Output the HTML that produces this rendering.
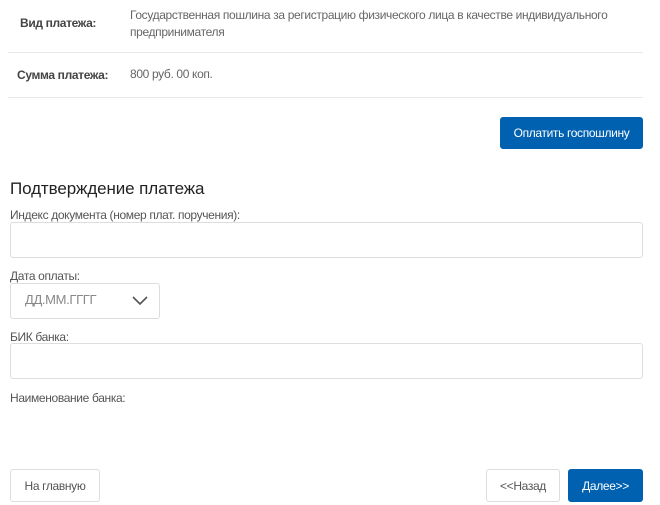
<!DOCTYPE html>
<html><head><meta charset="utf-8"><style>
*{box-sizing:border-box;margin:0;padding:0}
body{width:660px;height:505px;background:#fff;font-family:"Liberation Sans",Arial,sans-serif;color:#333;position:relative;overflow:hidden;font-size:12px;letter-spacing:-0.35px}
.a{position:absolute}
.lbl{font-weight:bold;color:#444}
.val{color:#666;line-height:17px}
.line{left:8px;width:635px;height:1px;background:#e8e8e8}
.btn{border:1px solid #ddd;border-radius:3px;background:#fff;color:#555;display:flex;align-items:center;justify-content:center;font-size:12px}
.blue{background:#0061b0;border-color:#0061b0;color:#fff}
.inp{border:1px solid #ddd;border-radius:3px;background:#fff}
.fl{color:#555;font-size:12px}
</style></head><body>
<div class="a lbl" style="left:20px;top:16px">Вид платежа:</div>
<div class="a val" style="left:130px;top:7px;width:500px">Государственная пошлина за регистрацию физического лица в качестве индивидуального предпринимателя</div>
<div class="a line" style="top:52px"></div>
<div class="a lbl" style="left:17px;top:68px">Сумма платежа:</div>
<div class="a val" style="left:130px;top:66px">800 руб. 00 коп.</div>
<div class="a line" style="top:97px"></div>
<div class="a btn blue" style="left:500px;top:117px;width:143px;height:32px">Оплатить госпошлину</div>
<div class="a" style="left:10px;top:179px;font-size:17px;color:#222;letter-spacing:-0.1px">Подтверждение платежа</div>
<div class="a fl" style="left:10px;top:208px">Индекс документа (номер плат. поручения):</div>
<div class="a inp" style="left:10px;top:222px;width:633px;height:36px"></div>
<div class="a fl" style="left:10px;top:269px">Дата оплаты:</div>
<div class="a inp" style="left:10px;top:283px;width:150px;height:36px"></div>
<div class="a" style="left:25px;top:292px;font-size:13px;color:#888">ДД.ММ.ГГГГ</div>
<svg class="a" style="left:131px;top:294px" width="18" height="12" viewBox="0 0 18 12"><path d="M2 3 L9 10 L16 3" fill="none" stroke="#555" stroke-width="1.6"/></svg>
<div class="a fl" style="left:10px;top:330px">БИК банка:</div>
<div class="a inp" style="left:10px;top:343px;width:633px;height:36px"></div>
<div class="a fl" style="left:10px;top:391px">Наименование банка:</div>
<div class="a btn" style="left:10px;top:469px;width:90px;height:33px">На главную</div>
<div class="a btn" style="left:486px;top:469px;width:74px;height:33px">&lt;&lt;Назад</div>
<div class="a btn blue" style="left:568px;top:469px;width:75px;height:33px">Далее&gt;&gt;</div>
</body></html>
